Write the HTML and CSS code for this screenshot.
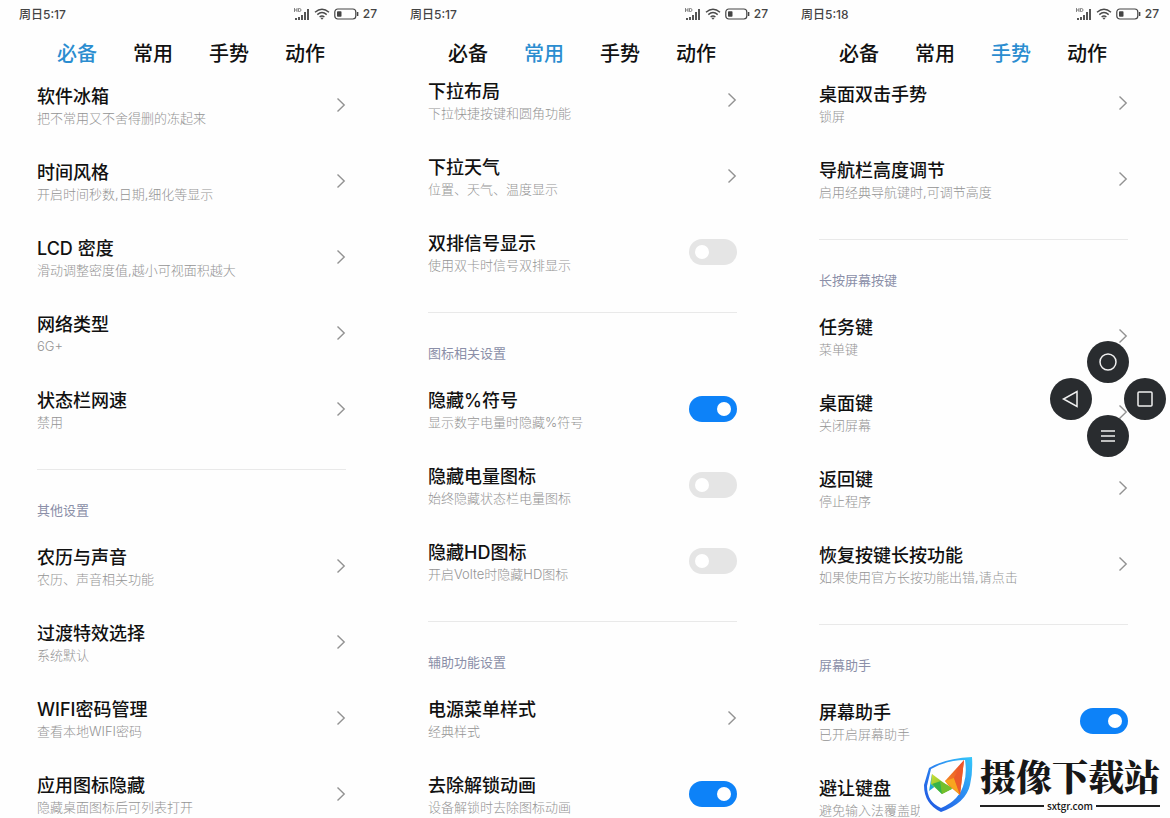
FILE: index.html
```html
<!DOCTYPE html>
<html lang="zh-CN">
<head>
<meta charset="utf-8">
<title>设置</title>
<link rel="stylesheet" href="styles.css">
</head>
<body>
<svg class="defs" aria-hidden="true">
  <symbol id="signal" viewBox="0 0 16 12"><path d="M.5 0v4M3 0v4M.5 2H3M4.500 .5h1q1.500 0 1.500 1.500t-1.500 1.500h-1z" fill="none" stroke="#555" stroke-width=".7"/><path d="M1 10h2v2H1zM4 9h2v3H4zM7 7h2v5H7zM10 4h2v8h-2zM13 1h2v11h-2z" fill="#555"/></symbol>
  <symbol id="wifi" viewBox="0 0 16 12"><path d="M1 4.200q7-6 14 0M3.300 6.600q4.700-4 9.400 0M5.600 9q2.400-2 4.800 0" fill="none" stroke="#4a4a4a" stroke-width="1.400"/><path d="M6.500 10q1.500-1 3 0L8 11.800z" fill="#4a4a4a"/></symbol>
  <symbol id="battery" viewBox="0 0 25 12"><rect x=".8" y="1" width="21" height="10" rx="3" fill="none" stroke="#444" stroke-width="1.200"/><rect x="3" y="3.200" width="4.500" height="5.600" rx=".8" fill="#444"/><path d="M23.600 4v4" stroke="#444" stroke-width="1.500"/></symbol>
  <symbol id="chevron" viewBox="0 0 10 16"><path d="M1.500 1.500 8.200 8l-6.700 6.500" fill="none" stroke="#929292" stroke-width="1.400"/></symbol>
</svg>
<main class="screens">
  <section class="screen">
    <header class="status"><span>周日5:17</span><span class="status-icons"><svg class="ic-small"><use href="#signal"/></svg><svg class="ic-small"><use href="#wifi"/></svg><svg class="ic-battery"><use href="#battery"/></svg><span>27</span></span></header>
    <nav class="tabs"><button class="tab active">必备</button><button class="tab">常用</button><button class="tab">手势</button><button class="tab">动作</button></nav>
    <div class="list list-a">
      <div class="group">
        <a class="row" href="#"><span class="text"><span class="title">软件冰箱</span><span class="sub">把不常用又不舍得删的冻起来</span></span><svg class="chevron"><use href="#chevron"/></svg></a>
        <a class="row" href="#"><span class="text"><span class="title">时间风格</span><span class="sub">开启时间秒数,日期,细化等显示</span></span><svg class="chevron"><use href="#chevron"/></svg></a>
        <a class="row" href="#"><span class="text"><span class="title">LCD 密度</span><span class="sub">滑动调整密度值,越小可视面积越大</span></span><svg class="chevron"><use href="#chevron"/></svg></a>
        <a class="row" href="#"><span class="text"><span class="title">网络类型</span><span class="sub">6G+</span></span><svg class="chevron"><use href="#chevron"/></svg></a>
        <a class="row" href="#"><span class="text"><span class="title">状态栏网速</span><span class="sub">禁用</span></span><svg class="chevron"><use href="#chevron"/></svg></a>
      </div>
      <h2 class="heading">其他设置</h2>
      <div class="group">
        <a class="row" href="#"><span class="text"><span class="title">农历与声音</span><span class="sub">农历、声音相关功能</span></span><svg class="chevron"><use href="#chevron"/></svg></a>
        <a class="row" href="#"><span class="text"><span class="title">过渡特效选择</span><span class="sub">系统默认</span></span><svg class="chevron"><use href="#chevron"/></svg></a>
        <a class="row" href="#"><span class="text"><span class="title">WIFI密码管理</span><span class="sub">查看本地WIFI密码</span></span><svg class="chevron"><use href="#chevron"/></svg></a>
        <a class="row" href="#"><span class="text"><span class="title">应用图标隐藏</span><span class="sub">隐藏桌面图标后可列表打开</span></span><svg class="chevron"><use href="#chevron"/></svg></a>
      </div>
    </div>
  </section>
  <section class="screen">
    <header class="status"><span>周日5:17</span><span class="status-icons"><svg class="ic-small"><use href="#signal"/></svg><svg class="ic-small"><use href="#wifi"/></svg><svg class="ic-battery"><use href="#battery"/></svg><span>27</span></span></header>
    <nav class="tabs"><button class="tab">必备</button><button class="tab active">常用</button><button class="tab">手势</button><button class="tab">动作</button></nav>
    <div class="list list-b">
      <div class="group">
        <a class="row" href="#"><span class="text"><span class="title">下拉布局</span><span class="sub">下拉快捷按键和圆角功能</span></span><svg class="chevron"><use href="#chevron"/></svg></a>
        <a class="row" href="#"><span class="text"><span class="title">下拉天气</span><span class="sub">位置、天气、温度显示</span></span><svg class="chevron"><use href="#chevron"/></svg></a>
        <label class="row"><span class="text"><span class="title">双排信号显示</span><span class="sub">使用双卡时信号双排显示</span></span><input class="switch" type="checkbox"></label>
      </div>
      <h2 class="heading">图标相关设置</h2>
      <div class="group">
        <label class="row"><span class="text"><span class="title">隐藏%符号</span><span class="sub">显示数字电量时隐藏%符号</span></span><input class="switch" type="checkbox" checked></label>
        <label class="row"><span class="text"><span class="title">隐藏电量图标</span><span class="sub">始终隐藏状态栏电量图标</span></span><input class="switch" type="checkbox"></label>
        <label class="row"><span class="text"><span class="title">隐藏HD图标</span><span class="sub">开启Volte时隐藏HD图标</span></span><input class="switch" type="checkbox"></label>
      </div>
      <h2 class="heading">辅助功能设置</h2>
      <div class="group">
        <a class="row" href="#"><span class="text"><span class="title">电源菜单样式</span><span class="sub">经典样式</span></span><svg class="chevron"><use href="#chevron"/></svg></a>
        <label class="row"><span class="text"><span class="title">去除解锁动画</span><span class="sub">设备解锁时去除图标动画</span></span><input class="switch" type="checkbox" checked></label>
      </div>
    </div>
  </section>
  <section class="screen">
    <header class="status"><span>周日5:18</span><span class="status-icons"><svg class="ic-small"><use href="#signal"/></svg><svg class="ic-small"><use href="#wifi"/></svg><svg class="ic-battery"><use href="#battery"/></svg><span>27</span></span></header>
    <nav class="tabs"><button class="tab">必备</button><button class="tab">常用</button><button class="tab active">手势</button><button class="tab">动作</button></nav>
    <div class="list list-c">
      <div class="group">
        <a class="row" href="#"><span class="text"><span class="title">桌面双击手势</span><span class="sub">锁屏</span></span><svg class="chevron"><use href="#chevron"/></svg></a>
        <a class="row" href="#"><span class="text"><span class="title">导航栏高度调节</span><span class="sub">启用经典导航键时,可调节高度</span></span><svg class="chevron"><use href="#chevron"/></svg></a>
      </div>
      <h2 class="heading">长按屏幕按键</h2>
      <div class="group">
        <a class="row" href="#"><span class="text"><span class="title">任务键</span><span class="sub">菜单键</span></span><svg class="chevron"><use href="#chevron"/></svg></a>
        <a class="row" href="#"><span class="text"><span class="title">桌面键</span><span class="sub">关闭屏幕</span></span><svg class="chevron"><use href="#chevron"/></svg></a>
        <a class="row" href="#"><span class="text"><span class="title">返回键</span><span class="sub">停止程序</span></span><svg class="chevron"><use href="#chevron"/></svg></a>
        <a class="row" href="#"><span class="text"><span class="title">恢复按键长按功能</span><span class="sub">如果使用官方长按功能出错,请点击</span></span><svg class="chevron"><use href="#chevron"/></svg></a>
      </div>
      <h2 class="heading">屏幕助手</h2>
      <div class="group">
        <label class="row"><span class="text"><span class="title">屏幕助手</span><span class="sub">已开启屏幕助手</span></span><input class="switch" type="checkbox" checked></label>
        <a class="row" href="#"><span class="text"><span class="title">避让键盘</span><span class="sub">避免输入法覆盖助</span></span></a>
      </div>
    </div>
    <div class="pad">
      <button class="key key-up" aria-label="主页"><svg viewBox="0 0 42 42"><circle cx="21" cy="21" r="8"/></svg></button>
      <button class="key key-left" aria-label="返回"><svg viewBox="0 0 42 42"><path d="M27 13.500v15L13.500 21z"/></svg></button>
      <button class="key key-right" aria-label="任务"><svg viewBox="0 0 42 42"><rect x="14" y="14" width="14" height="14" rx="1"/></svg></button>
      <button class="key key-down" aria-label="菜单"><svg viewBox="0 0 42 42"><path d="M14 16h14M14 21h14M14 26h14"/></svg></button>
    </div>
    <aside class="brand">
      <svg class="shield" viewBox="0 0 50 56" aria-hidden="true">
        <defs>
          <linearGradient id="rim" x1="1" y1="0" x2="0" y2="1"><stop offset="0" stop-color="#35c8fa"/><stop offset=".5" stop-color="#2b83f0"/><stop offset="1" stop-color="#1d51df"/></linearGradient>
          <linearGradient id="hot" x1="0" y1="1" x2="1" y2="0"><stop offset="0" stop-color="#f79a21"/><stop offset="1" stop-color="#e9412c"/></linearGradient>
          <linearGradient id="leaf" x1="0" y1="0" x2="1" y2="1"><stop offset="0" stop-color="#d3df32"/><stop offset="1" stop-color="#3fae35"/></linearGradient>
        </defs>
        <path d="M49 1Q50 17 47 29 43 47 18 56 1 48 1 29L6 12Q23 2 49 1zM42 4Q24 4 8 13L4 30Q4 46 18 52 37 44 41 27 44 17 42 4z" fill="url(#rim)" fill-rule="evenodd"/>
        <path d="M9 18 6 35 14 29z" fill="#1fa7d8"/>
        <path d="M9 18 29 33 19 38 8 28z" fill="url(#leaf)"/>
        <path d="M9 28 18 25 19 38z" fill="#35b34a"/>
        <path d="M19 38 17 25 30 32z" fill="#74bf2b"/>
        <path d="M22 25 41 4 37 39 25 29z" fill="url(#hot)"/>
        <path d="M22 25 31 22 37 39z" fill="#f8a51f"/>
        <path d="M31 22 41 4 37 39z" fill="#ec5a2a"/>
      </svg>
      <div class="brand-text"><strong class="brand-name">摄像下载站</strong><span class="brand-url">sxtgr.com</span></div>
    </aside>
  </section>
</main>
</body>
</html>
```
FILE: styles.css
```css
* { box-sizing: border-box; }
body {
  margin: 0;
  background: #fefefe;
  color: #111;
  font-family: Inter, "Noto Sans CJK SC", sans-serif;
}
button { border: 0; padding: 0; background: none; color: inherit; font: inherit; }
.defs { position: absolute; width: 0; height: 0; }
.screens {
  position: relative;
  display: grid;
  grid-template-columns: repeat(3, 1fr);
  gap: 3px;
  height: 100vh;
  overflow: hidden;
}
.status {
  display: flex;
  align-items: center;
  justify-content: space-between;
  height: 27px;
  padding: 0 11px 0 19px;
  color: #444;
  font-size: 12px;
  font-weight: 500;
}
.status-icons { display: flex; align-items: center; gap: 4px; }
.ic-small { width: 16px; height: 12px; }
.ic-battery { width: 25px; height: 12px; }
.tabs { display: flex; gap: 36px; padding: 13px 0 0 57px; }
.tab {
  font-family: "Noto Sans CJK SC", sans-serif;
  font-size: 20px;
  font-weight: 500;
  line-height: 26px;
  white-space: nowrap;
}
.tab.active { color: #2b8dd0; }
.list { padding: 0 42px 0 37px; }
.list-a { padding-top: 19px; }
.list-b { padding-top: 14px; }
.list-c { padding-top: 17px; }
.group { display: grid; gap: 34px; }
.row {
  display: flex;
  align-items: center;
  justify-content: space-between;
  color: inherit;
  text-decoration: none;
}
.text { display: grid; white-space: nowrap; }
.title { font-size: 18px; font-weight: 500; line-height: 24px; }
.sub { color: #949494; font-size: 13px; font-weight: 300; line-height: 18px; }
.heading {
  margin: 38px 0 27px;
  padding-top: 31px;
  border-top: 1px solid #e9e9e9;
  color: #8b8fa8;
  font-size: 13px;
  font-weight: 400;
  line-height: 18px;
}
.chevron { width: 10px; height: 16px; margin-bottom: 2px; }
.switch {
  appearance: none;
  display: flex;
  align-items: center;
  width: 48px;
  height: 26px;
  margin: 0 0 2px;
  padding: 0 6px;
  border-radius: 13px;
  background: #e5e5e5;
}
.switch::before { content: ""; width: 14px; height: 14px; border-radius: 50%; background: #fff; }
.switch:checked { justify-content: flex-end; background: #0d82f8; }
.pad {
  position: absolute;
  top: 341px;
  right: 4px;
  display: grid;
  grid-template: 37px 42px 37px / 37px 42px 37px;
}
.key { width: 42px; height: 42px; border-radius: 50%; background: #292c2f; }
.key svg { display: block; fill: none; stroke: #f0f0f0; stroke-width: 1.5; }
.key-up { grid-area: 1 / 2; }
.key-left { grid-area: 2 / 1; }
.key-right { grid-area: 2 / 3; justify-self: end; }
.key-down { grid-area: 3 / 2; align-self: end; }
.brand {
  position: absolute;
  right: 0;
  bottom: 0;
  display: flex;
  gap: 7px;
  padding: 4px 10px 6px 3px;
  background: #fefefe;
}
.shield { width: 50px; height: 56px; }
.brand-text { display: grid; align-content: start; padding-top: 2px; color: #171717; }
.brand-name {
  font-family: "Liberation Serif", "Noto Serif CJK SC", "Noto Sans CJK SC", serif;
  font-size: 36px;
  font-weight: 900;
  line-height: 42px;
}
.brand-url {
  display: flex;
  align-items: center;
  gap: 3px;
  font: 500 10px/12px "Noto Sans CJK SC", sans-serif;
}
.brand-url::before, .brand-url::after { content: ""; flex: 1; height: 2px; background: #222; }
```
